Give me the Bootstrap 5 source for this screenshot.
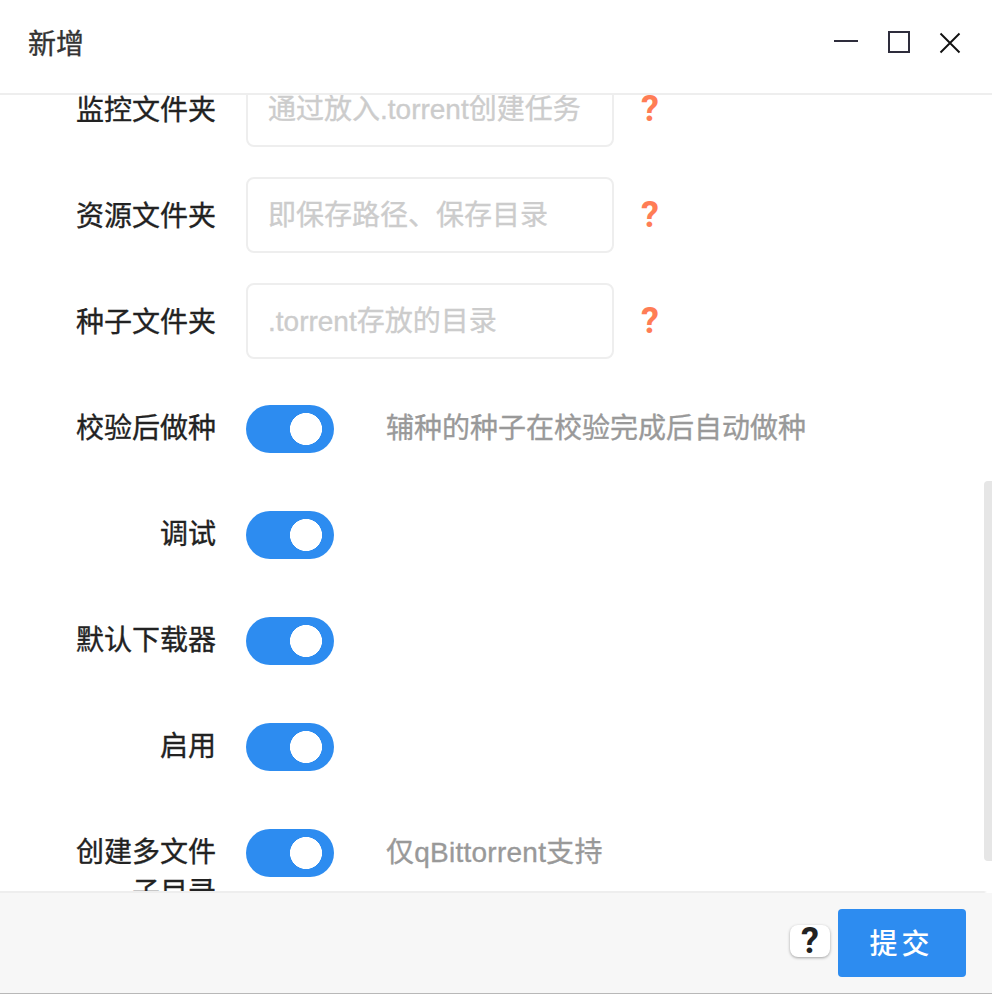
<!DOCTYPE html>
<html lang="zh-CN">
<head>
<meta charset="utf-8">
<meta name="viewport" content="width=device-width, initial-scale=1">
<title>新增</title>
<link href="https://cdn.jsdelivr.net/npm/bootstrap@5.3.0/dist/css/bootstrap.min.css" rel="stylesheet">
<style>
body{font-family:"Liberation Sans","Noto Sans CJK SC",sans-serif;font-size:28px;line-height:40px;color:#222;height:994px;background:#fff;-webkit-text-stroke:.35px}
.dlg-head{height:95px;border-bottom:2px solid #eee;padding:0 30px 9px 28px;color:#333}
.dlg-title{padding-top:5px}
.dlg-body{height:796px}
.dlg-form{margin-top:-24px}
.form-line{height:76px;margin-bottom:30px}
.line-label{width:246px;padding:20px 30px 0 70px}
.form-line .form-control{width:368px;height:76px;border:2px solid #eee;border-radius:8px;padding:2px 20px 0;font-size:28px;line-height:70px}
.form-control::placeholder{color:#ccc;opacity:1}
.help-mark{font-family:Roboto,sans-serif;font-weight:700;font-size:36px;line-height:36px;color:#ff7d55;margin:20px 0 0 27px;-webkit-text-stroke:0}
.form-switch.toggle{padding:0;margin:16px 0 0;min-height:0}
.form-switch.toggle .form-check-input{width:88px;height:48px;margin:0;float:none;display:block;border:0;border-radius:24px;background:#2d8cf0}
.form-switch.toggle .form-check-input:checked{background:radial-gradient(circle at 60px 24px,#fff 15.7px,#2d8cf0 16.3px)}
.line-hint{color:#999;margin:20px 0 0 52px}
.hint-qb{letter-spacing:.25px}
.scroll-thumb{position:absolute;right:0;top:386px;width:8px;height:380px;background:#e6e6e6;border-radius:4px 0 0 4px}
.dlg-foot{height:103px;background:#f7f7f7;border-bottom:1px solid #b8b8b8;padding:18px 26px 0 0}
.foot-rule{position:absolute;left:0;right:0;top:0;height:2px;background:linear-gradient(90deg,#eee 984px,#fff 987px)}
.key-help{width:40px;height:32px;border-radius:8px;background:#fff;box-shadow:0 1px 3px rgba(0,0,0,.35);font-family:Roboto,sans-serif;font-weight:700;font-size:36px;line-height:33px;color:#222;margin:16px 8px 0 0;-webkit-text-stroke:0}
.btn-submit{width:128px;height:68px;background:#2d8cf0;border-radius:4px;color:#fff;font-size:28px;font-weight:500;letter-spacing:4px;border:0;padding:3px 1px 0 0;line-height:65px;-webkit-text-stroke:0}
.btn-submit:hover{background:#2d8cf0;color:#fff}
</style>
</head>
<body class="d-flex flex-column overflow-hidden">
<header class="dlg-head d-flex align-items-center justify-content-between flex-shrink-0">
  <span class="dlg-title">新增</span>
  <svg width="130" height="28" viewBox="0 0 130 28" fill="none" aria-hidden="true">
    <path d="M2 13H26" stroke="#2e2d3c" stroke-width="2"/>
    <rect x="57" y="4" width="20" height="20" stroke="#2e2d3c" stroke-width="2"/>
    <path d="M108.5 5.5L127.5 24.5M127.5 5.5L108.5 24.5" stroke="#111" stroke-width="1.9"/>
  </svg>
</header>
<main class="dlg-body position-relative overflow-hidden flex-shrink-0">
  <form class="dlg-form">
    <div class="form-line d-flex align-items-start">
      <label class="line-label text-end">监控文件夹</label>
      <input class="form-control" type="text" placeholder="通过放入.torrent创建任务">
      <span class="help-mark">?</span>
    </div>
    <div class="form-line d-flex align-items-start">
      <label class="line-label text-end">资源文件夹</label>
      <input class="form-control" type="text" placeholder="即保存路径、保存目录">
      <span class="help-mark">?</span>
    </div>
    <div class="form-line d-flex align-items-start">
      <label class="line-label text-end">种子文件夹</label>
      <input class="form-control" type="text" placeholder=".torrent存放的目录">
      <span class="help-mark">?</span>
    </div>
    <div class="form-line d-flex align-items-start">
      <label class="line-label text-end">校验后做种</label>
      <div class="form-check form-switch toggle"><input class="form-check-input" type="checkbox" role="switch" checked></div>
      <span class="line-hint">辅种的种子在校验完成后自动做种</span>
    </div>
    <div class="form-line d-flex align-items-start">
      <label class="line-label text-end">调试</label>
      <div class="form-check form-switch toggle"><input class="form-check-input" type="checkbox" role="switch" checked></div>
    </div>
    <div class="form-line d-flex align-items-start">
      <label class="line-label text-end">默认下载器</label>
      <div class="form-check form-switch toggle"><input class="form-check-input" type="checkbox" role="switch" checked></div>
    </div>
    <div class="form-line d-flex align-items-start">
      <label class="line-label text-end">启用</label>
      <div class="form-check form-switch toggle"><input class="form-check-input" type="checkbox" role="switch" checked></div>
    </div>
    <div class="form-line d-flex align-items-start">
      <label class="line-label text-end">创建多文件子目录</label>
      <div class="form-check form-switch toggle"><input class="form-check-input" type="checkbox" role="switch" checked></div>
      <span class="line-hint hint-qb">仅qBittorrent支持</span>
    </div>
  </form>
  <div class="scroll-thumb"></div>
</main>
<footer class="dlg-foot position-relative d-flex justify-content-end align-items-start flex-shrink-0">
  <div class="foot-rule"></div>
  <span class="key-help text-center">?</span>
  <button class="btn btn-submit" type="button">提交</button>
</footer>
<script src="https://cdn.jsdelivr.net/npm/bootstrap@5.3.0/dist/js/bootstrap.bundle.min.js"></script>
</body>
</html>
